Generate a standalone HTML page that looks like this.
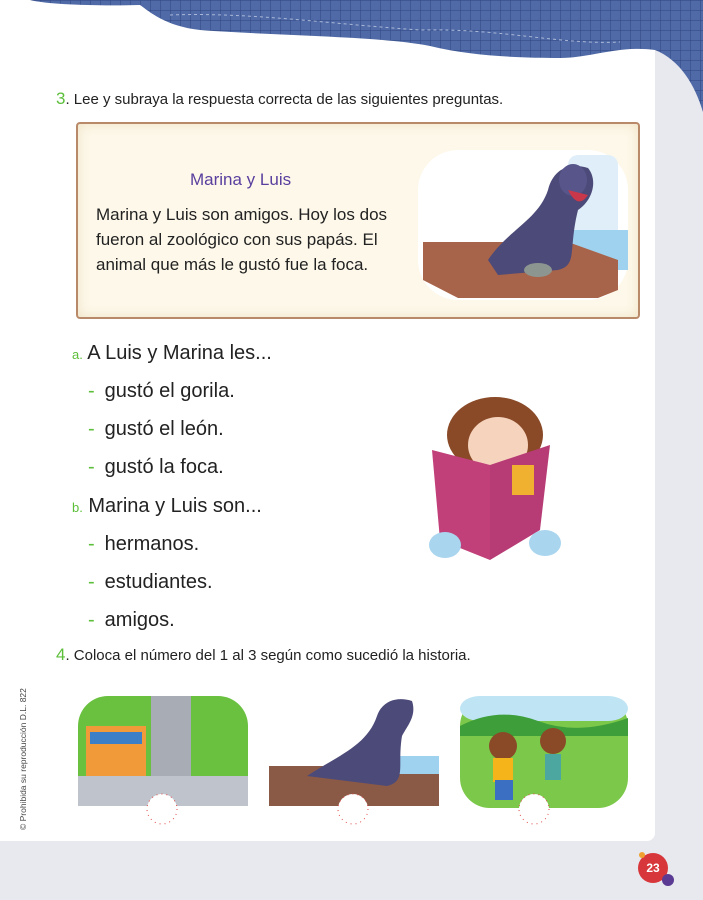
<!DOCTYPE html>
<html><head><meta charset="utf-8"><style>
body{margin:0;width:703px;height:900px;background:#e8e9ee;position:relative;overflow:hidden;font-family:"Liberation Sans",sans-serif;color:#222}
.card{position:absolute;left:0;top:0;width:655px;height:841px;background:#fff;border-radius:0 0 8px 0}
.t{position:absolute;white-space:nowrap}
.g{color:#5cbf3a}
.it{font-size:20px}
.dash{color:#5cbf3a;margin-right:10px}
</style></head><body>
<div class="card"></div>
<svg style="position:absolute;left:0;top:0" width="703" height="115">
<defs><pattern id="gr" width="10" height="10" patternUnits="userSpaceOnUse"><rect width="10" height="10" fill="#4f6aa6"/><path d="M0 0H10M0 0V10" stroke="#2f4683" stroke-width="1"/></pattern></defs>
<path d="M30 0H703V112C695 85 680 60 655 50C620 45 590 58 560 58C520 58 470 56 430 46C380 36 280 36 200 30C165 26 150 12 140 5C100 6 50 5 30 0Z" fill="url(#gr)"/>
<path d="M170 15C250 12 330 24 420 30C500 28 560 45 620 42" stroke="#aab8d8" stroke-dasharray="3 3" fill="none"/>
</svg>
<div class="t" style="left:56px;top:89px;font-size:15px"><span class="g" style="font-size:17px">3</span>. Lee y subraya la respuesta correcta de las siguientes preguntas.</div>
<div style="position:absolute;left:76px;top:122px;width:560px;height:193px;background:#fdf8ea;border:2px solid #b98a6a;border-radius:4px;box-shadow:inset 0 0 12px #f0e2c4"></div>
<div class="t" style="left:190px;top:170px;font-size:17px;color:#5a3f9e">Marina y Luis</div>
<div class="t" style="left:96px;top:202px;font-size:17px;line-height:25px">Marina y Luis son amigos. Hoy los dos<br>fueron al zoológico con sus papás. El<br>animal que más le gustó fue la foca.</div>
<svg style="position:absolute;left:418px;top:150px" width="210" height="150">
<rect x="0" y="0" width="210" height="150" rx="40" fill="#fff"/>
<rect x="150" y="5" width="50" height="90" rx="10" fill="#dfeef8"/>
<rect x="130" y="80" width="80" height="40" fill="#9fd2ee"/>
<path d="M5 92H150L200 110V140L180 148H40L5 130Z" fill="#a8644a"/>
<path d="M70 110C90 80 120 70 130 40C135 20 150 12 170 18C180 30 175 50 160 60C150 100 160 115 140 120L80 125Z" fill="#4c4a78"/>
<ellipse cx="155" cy="30" rx="14" ry="16" fill="#57558a"/><path d="M150 40Q160 60 170 45Z" fill="#c9374a"/>
<ellipse cx="120" cy="120" rx="14" ry="7" fill="#8d9590"/>
</svg>
<div class="t it" style="left:72px;top:342px"><span class="g" style="font-size:13px">a.</span> A Luis y Marina les...</div>
<div class="t it" style="left:88px;top:380px"><span class="dash">-</span>gustó el gorila.</div>
<div class="t it" style="left:88px;top:418px"><span class="dash">-</span>gustó el león.</div>
<div class="t it" style="left:88px;top:456px"><span class="dash">-</span>gustó la foca.</div>
<div class="t it" style="left:72px;top:495px"><span class="g" style="font-size:13px">b.</span> Marina y Luis son...</div>
<div class="t it" style="left:88px;top:533px"><span class="dash">-</span>hermanos.</div>
<div class="t it" style="left:88px;top:571px"><span class="dash">-</span>estudiantes.</div>
<div class="t it" style="left:88px;top:609px"><span class="dash">-</span>amigos.</div>
<svg style="position:absolute;left:420px;top:390px" width="150" height="180">
<ellipse cx="75" cy="45" rx="48" ry="38" fill="#8a4a28"/>
<ellipse cx="78" cy="55" rx="30" ry="28" fill="#f6d3bd"/>
<path d="M12 60L70 75L70 170L20 150Z" fill="#c2407a"/><path d="M70 75L130 55L120 140L70 170Z" fill="#b73b74"/>
<rect x="92" y="75" width="22" height="30" fill="#f0b030"/>
<ellipse cx="25" cy="155" rx="16" ry="13" fill="#a9d5ef"/><ellipse cx="125" cy="153" rx="16" ry="13" fill="#a9d5ef"/>
</svg>
<div class="t" style="left:56px;top:645px;font-size:15px"><span class="g" style="font-size:17px">4</span>. Coloca el número del 1 al 3 según como sucedió la historia.</div>
<svg style="position:absolute;left:76px;top:696px" width="180" height="135">
<rect x="2" y="0" width="170" height="110" rx="30" fill="#6ac140"/>
<rect x="75" y="0" width="40" height="100" fill="#a8adb5"/>
<rect x="10" y="30" width="60" height="70" fill="#f09a3a"/><rect x="14" y="36" width="52" height="12" fill="#3b7fc8"/>
<rect x="2" y="80" width="170" height="30" fill="#bfc4cc"/>
<circle cx="86" cy="113" r="15" fill="#fff" stroke="#e24848" stroke-dasharray="1 4"/>
</svg>
<svg style="position:absolute;left:267px;top:696px" width="180" height="135">
<rect x="2" y="0" width="170" height="110" rx="30" fill="#fff"/>
<rect x="2" y="70" width="170" height="40" fill="#8a5a46"/><rect x="120" y="60" width="52" height="18" fill="#9fd2ee"/>
<path d="M40 80C70 60 100 50 110 20C115 5 130 0 145 5C150 20 140 30 135 40C130 70 140 85 120 90Z" fill="#4c4a78"/>
<circle cx="86" cy="113" r="15" fill="#fff" stroke="#e24848" stroke-dasharray="1 4"/>
</svg>
<svg style="position:absolute;left:458px;top:696px" width="180" height="135">
<rect x="2" y="0" width="168" height="112" rx="30" fill="#7cc84a"/>
<rect x="2" y="0" width="168" height="25" rx="20" fill="#bfe4f3"/>
<path d="M2 30Q40 10 80 25T170 22V40H2Z" fill="#3d9e3a"/>
<circle cx="45" cy="50" r="14" fill="#8a4a28"/><rect x="35" y="62" width="20" height="24" fill="#f4b41a"/><rect x="37" y="84" width="18" height="20" fill="#3a6fc2"/>
<circle cx="95" cy="45" r="13" fill="#8a4a28"/><rect x="87" y="58" width="16" height="26" fill="#4ba7a0"/>
<circle cx="76" cy="113" r="15" fill="#fff" stroke="#e24848" stroke-dasharray="1 4"/>
</svg>
<div class="t" style="left:18px;top:830px;font-size:8.5px;color:#444;transform:rotate(-90deg);transform-origin:0 0">© Prohibida su reproducción D.L. 822</div>
<div style="position:absolute;left:638px;top:853px;width:30px;height:30px;border-radius:50%;background:#d7373b;color:#fff;font-weight:bold;font-size:12px;text-align:center;line-height:30px">23</div>
<div style="position:absolute;left:662px;top:874px;width:12px;height:12px;border-radius:50%;background:#5b3a94"></div>
<div style="position:absolute;left:639px;top:852px;width:6px;height:6px;border-radius:50%;background:#f0a030"></div>
</body></html>
